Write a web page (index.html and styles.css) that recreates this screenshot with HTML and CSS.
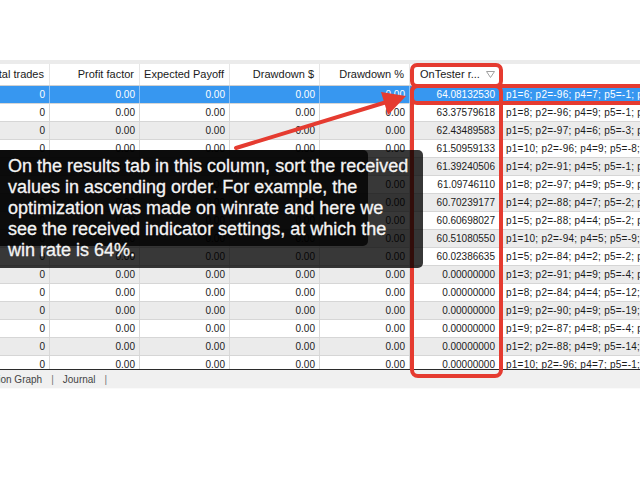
FILE: index.html
```html
<!DOCTYPE html>
<html lang="en">
<head>
    <meta charset="UTF-8">
    <title>Optimization Results</title>
    <link rel="stylesheet" href="styles.css">
</head>
<body>
    <div class="window">
        <div class="toolbar"></div>
        <div class="strip"></div>
        <div class="results">
            <div class="row head">
                <div class="cell">Total trades</div>
                <div class="cell">Profit factor</div>
                <div class="cell">Expected Payoff</div>
                <div class="cell">Drawdown $</div>
                <div class="cell">Drawdown %</div>
                <div class="cell sorted">
                    <span>OnTester r...</span>
                    <svg width="9" height="7" viewBox="0 0 9 7"><path d="M0.5 0.5 H8.5 L4.5 6.5 Z" fill="none" stroke="#a0a0a0"/></svg>
                </div>
                <div class="cell params"></div>
            </div>
            <div id="rows"></div>
        </div>
        <div class="tabs">
            <span class="tab first">Optimization Graph</span>
            <span class="sep">|</span>
            <span class="tab">Journal</span>
            <span class="sep">|</span>
        </div>
    </div>

    <svg class="marks" width="640" height="480" viewBox="0 0 640 480">
        <g fill="none" stroke="#e53b30" stroke-width="4">
            <rect x="412" y="65" width="89" height="21" rx="5"/>
            <rect x="412" y="86" width="250" height="17" rx="5"/>
            <rect x="412" y="86" width="89" height="290" rx="6"/>
            <line x1="236" y1="148" x2="390" y2="101" stroke-linecap="round"/>
        </g>
        <polygon points="381,92 406,96 388,115" fill="#e53b30"/>
    </svg>

    <div class="note">
        <div class="note-shade"></div>
        <p>On the results tab in this column, sort the received<br>
        values in ascending order. For example, the<br>
        optimization was made on winrate and here we<br>
        see the received indicator settings, at which the<br>
        win rate is 64%.</p>
    </div>

    <script>
        const results = [
            ['64.08132530', 'p1=6; p2=-96; p4=7; p5=-1; p6=14; p7=2'],
            ['63.37579618', 'p1=8; p2=-96; p4=9; p5=-1; p6=11; p7=3'],
            ['62.43489583', 'p1=5; p2=-97; p4=6; p5=-3; p6=16; p7=2'],
            ['61.50959133', 'p1=10; p2=-96; p4=9; p5=-8; p6=12; p7=4'],
            ['61.39240506', 'p1=4; p2=-91; p4=5; p5=-1; p6=13; p7=1'],
            ['61.09746110', 'p1=8; p2=-97; p4=9; p5=-9; p6=15; p7=3'],
            ['60.70239177', 'p1=4; p2=-88; p4=7; p5=-2; p6=10; p7=2'],
            ['60.60698027', 'p1=5; p2=-88; p4=4; p5=-2; p6=17; p7=4'],
            ['60.51080550', 'p1=10; p2=-94; p4=5; p5=-9; p6=12; p7=1'],
            ['60.02386635', 'p1=5; p2=-84; p4=2; p5=-2; p6=14; p7=3'],
            ['0.00000000', 'p1=3; p2=-91; p4=9; p5=-4; p6=18; p7=2'],
            ['0.00000000', 'p1=8; p2=-84; p4=4; p5=-12; p6=11; p7=4'],
            ['0.00000000', 'p1=9; p2=-90; p4=9; p5=-19; p6=13; p7=1'],
            ['0.00000000', 'p1=9; p2=-87; p4=8; p5=-4; p6=16; p7=2'],
            ['0.00000000', 'p1=2; p2=-88; p4=9; p5=-14; p6=10; p7=3'],
            ['0.00000000', 'p1=10; p2=-96; p4=7; p5=-1; p6=15; p7=2']
        ];

        const rowsElement = document.getElementById('rows');
        results.forEach((r, i) => {
            const row = document.createElement('div');
            row.className = 'row' + (i === 0 ? ' sel' : '');
            row.innerHTML = `
                <div class="cell">0</div>
                <div class="cell">0.00</div>
                <div class="cell">0.00</div>
                <div class="cell">0.00</div>
                <div class="cell">0.00</div>
                <div class="cell">${r[0]}</div>
                <div class="cell params">${r[1]}</div>
            `;
            rowsElement.appendChild(row);
        });
    </script>
</body>
</html>
```

FILE: styles.css
```css
body {
    margin: 0;
    width: 640px;
    height: 480px;
    overflow: hidden;
    position: relative;
    background-color: #fff;
    font-family: "Liberation Sans", Arial, sans-serif;
}

.toolbar {
    height: 60px;
}

.strip {
    height: 4px;
    background-color: #ebebeb;
}

.results {
    height: 305px;
    overflow: hidden;
    border-bottom: 1px solid #2b2b2b;
}

.row {
    display: grid;
    grid-template-columns: repeat(6, 90px) 420px;
    margin-left: -40px;
    height: 18px;
    box-sizing: border-box;
    border-bottom: 1px solid #d6d6d6;
}

#rows .row:nth-child(odd) {
    background-color: #ebebeb;
}

#rows .row.sel {
    background-color: #3797f0;
}

.cell {
    padding: 0 4px;
    border-right: 1px solid #d9d9d9;
    text-align: right;
    font-size: 10px;
    line-height: 17px;
    color: #1b1b1b;
    white-space: nowrap;
    overflow: hidden;
}

.sel .cell {
    color: #fff;
    border-right-color: #8cc0f4;
}

.params {
    text-align: left;
    padding-left: 6px;
    letter-spacing: 0.25px;
    border-right: none;
}

.head {
    height: 22px;
    background-color: #fff;
    border-bottom: 1px solid #d0d0d0;
}

.head .cell {
    font-size: 11px;
    line-height: 21px;
    color: #1a1a1a;
    padding-right: 5px;
    border-right-color: #e6e6e6;
}

.head .sorted {
    display: flex;
    align-items: center;
    justify-content: space-between;
    padding-left: 10px;
    padding-right: 4px;
}

.tabs {
    display: flex;
    align-items: center;
    gap: 9px;
    height: 18px;
    background-color: #f0f0f0;
    font-size: 10px;
    color: #444;
    border-bottom: 1px solid #fafafa;
}

.tab.first {
    margin-left: -44px;
}

.sep {
    color: #777;
}

.marks {
    position: absolute;
    left: 0;
    top: 0;
    pointer-events: none;
}

.note {
    position: absolute;
    left: 0;
    top: 150px;
    width: 423px;
    height: 118px;
    background-color: rgba(0, 0, 0, 0.78);
    border-radius: 0 5px 5px 0;
}

.note-shade {
    position: absolute;
    left: 0;
    top: 0;
    width: 368px;
    height: 96px;
    background-color: rgba(0, 0, 0, 0.78);
    border-radius: 0 5px 5px 0;
}

.note p {
    position: relative;
    margin: 0;
    padding: 6px 0 0 8px;
    font-size: 18px;
    line-height: 21px;
    color: #f4f4f4;
    -webkit-text-stroke: 0.3px #f4f4f4;
}
```
